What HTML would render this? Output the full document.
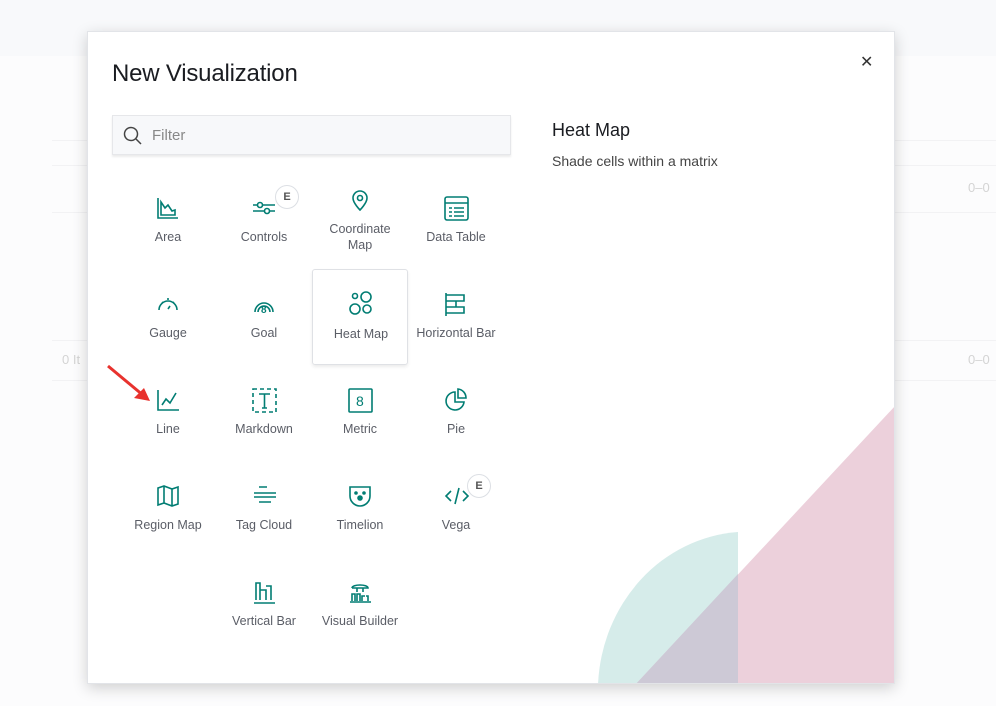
<!DOCTYPE html>
<html><head><meta charset="utf-8"><style>
*{margin:0;padding:0;box-sizing:border-box}
body{width:996px;height:706px;overflow:hidden;background:#fcfcfd;font-family:"Liberation Sans",sans-serif;position:relative}
.bgtop{position:absolute;left:0;top:0;width:996px;height:56px;background:#f8f9fb}
.bgline{position:absolute;left:52px;right:0;height:1px;background:#f2f2f4}
.modal{position:absolute;left:87px;top:31px;width:808px;height:653px;background:#fff;border:1px solid #e2e4e8;box-shadow:0 4px 14px rgba(0,0,0,.18);overflow:hidden}
h1{position:absolute;left:24px;top:28px;font-size:24px;font-weight:normal;color:#1a1c21;letter-spacing:-.2px}
.close{position:absolute;left:772px;top:20px;font-size:16px;color:#333}
.filter{position:absolute;left:24px;top:83px;width:399px;height:40px;background:#f7f8fa;border:1px solid #e6e7ea;box-shadow:0 2px 2px rgba(0,0,0,.08)}
.filter span{position:absolute;left:39px;top:11px;font-size:15px;color:#888}
.item{position:absolute;width:96px;height:96px;text-align:center}
.item svg{position:absolute;left:36px;top:18px}
.item .lbl{position:absolute;left:0;width:96px;top:51px;font-size:12.5px;color:#5a5d66;line-height:16px}
.sel{border:1px solid #dfe1e5;border-radius:3px;box-shadow:0 2px 3px rgba(0,0,0,.08)}
.badge{position:absolute;width:24px;height:24px;border-radius:12px;border:1px solid #dcdfe4;background:#fff;font-size:11px;color:#555;text-align:center;line-height:22px;font-weight:bold}
.dtitle{position:absolute;left:464px;top:88px;font-size:18px;color:#1a1c21}
.ddesc{position:absolute;left:464px;top:121px;font-size:14px;color:#444}
.num{position:absolute;font-size:13px;color:#d4d4d4}
</style></head><body>
<div class="bgtop"></div>
<div class="bgline" style="top:140px"></div>
<div class="bgline" style="top:165px"></div>
<div class="bgline" style="top:212px"></div>
<div class="bgline" style="top:340px"></div>
<div class="bgline" style="top:380px"></div>
<div class="num" style="left:968px;top:180px">0–0</div>
<div class="num" style="left:968px;top:352px">0–0</div>
<div class="num" style="left:62px;top:352px">0 It</div>
<div class="modal">
<svg style="position:absolute;left:0;top:0" width="808" height="653">
<path d="M510 653 A150 160 0 0 1 650 500 L650 653Z" fill="#d6ecea"/>
<path d="M547 653 L808 373 L808 653Z" fill="#ecd0db"/>
<path d="M547 653 L650 542 L650 653Z" fill="#cdc9d6"/>
</svg>
<h1>New Visualization</h1>
<div class="close">✕</div>
<div class="filter"><svg style="position:absolute;left:10px;top:10px" width="20" height="20" fill="none" stroke="#444" stroke-width="1.5"><circle cx="8" cy="8" r="6.5"/><path d="M13 13l5 5"/></svg><span>Filter</span></div>
<div class="dtitle">Heat Map</div>
<div class="ddesc">Shade cells within a matrix</div>

<div class="item" style="left:32px;top:146px"><svg width="24" height="24" fill="none" stroke="#017d73" stroke-width="1.6"><path d="M2 2v20h20M5 19V6l4 6 3-3 4 6 3-1v5z"/></svg><div class="lbl">Area</div></div>
<div class="item" style="left:128px;top:146px"><svg width="24" height="24" fill="none" stroke="#017d73" stroke-width="1.6"><path d="M1 9h22M1 15h22"/><circle cx="8" cy="9" r="2.5" fill="#fff"/><circle cx="15" cy="15" r="2.5" fill="#fff"/></svg><div class="lbl">Controls</div></div>
<div class="badge" style="left:187px;top:153px">E</div>
<div class="item" style="left:224px;top:138px"><svg width="24" height="24" fill="none" stroke="#017d73" stroke-width="1.6"><path d="M12 22s-7-7-7-12a7 7 0 0114 0c0 5-7 12-7 12z"/><circle cx="12" cy="10" r="2.5"/></svg><div class="lbl">Coordinate<br>Map</div></div>
<div class="item" style="left:320px;top:146px"><svg width="26" height="26" fill="none" stroke="#017d73" stroke-width="1.6"><rect x="1" y="1" width="23" height="23" rx="2"/><path d="M1 7h23M5 12h3M10 12h10M5 16h3M10 16h10M5 20h3M10 20h10"/></svg><div class="lbl">Data Table</div></div>

<div class="item" style="left:32px;top:242px"><svg width="24" height="24" fill="none" stroke="#017d73" stroke-width="1.6"><path d="M3 18A9 9 0 1121 18M12 6v2M6 10l1 1M18 10l-1 1M14 14l-2 3"/></svg><div class="lbl">Gauge</div></div>
<div class="item" style="left:128px;top:242px"><svg width="24" height="24" fill="none" stroke="#017d73" stroke-width="1.6"><path d="M3 20A9 9 0 1121 20M6 20a6 6 0 1112 0"/><text x="9" y="21" font-size="10" fill="#017d73" stroke="none" font-family="Liberation Sans" font-weight="bold">8</text></svg><div class="lbl">Goal</div></div>
<div class="item sel" style="left:224px;top:237px"><svg width="26" height="26" fill="none" stroke="#017d73" stroke-width="1.6" style="top:21px"><circle cx="6" cy="5" r="2.5"/><circle cx="17" cy="6" r="5"/><circle cx="6" cy="18" r="5"/><circle cx="18" cy="18" r="4"/></svg><div class="lbl" style="top:56px">Heat Map</div></div>
<div class="item" style="left:320px;top:242px"><svg width="24" height="24" fill="none" stroke="#017d73" stroke-width="1.6"><path d="M2 1v23M2 3h18v6H2M2 9h10v6H2M2 15h18v6H2"/></svg><div class="lbl">Horizontal Bar</div></div>

<div class="item" style="left:32px;top:338px"><svg width="24" height="24" fill="none" stroke="#017d73" stroke-width="1.6"><path d="M2 2v20h21M6 17l4-6 4 4 6-10"/></svg><div class="lbl">Line</div></div>
<div class="item" style="left:128px;top:338px"><svg width="26" height="26" fill="none" stroke="#017d73" stroke-width="1.6"><rect x="1" y="1" width="23" height="23" stroke-dasharray="4 3"/><path d="M7 6h11M12.5 6v14M10 20h5"/></svg><div class="lbl">Markdown</div></div>
<div class="item" style="left:224px;top:338px"><svg width="26" height="26" fill="none" stroke="#017d73" stroke-width="1.6"><rect x="1" y="1" width="23" height="23" rx="1"/><text x="8" y="18" font-size="14" fill="#017d73" stroke="none" font-family="Liberation Sans">8</text></svg><div class="lbl">Metric</div></div>
<div class="item" style="left:320px;top:338px"><svg width="24" height="24" fill="none" stroke="#017d73" stroke-width="1.6"><path d="M11 4a9 9 0 109 10h-9z"/><path d="M14 1a9 9 0 018 9h-8z"/></svg><div class="lbl">Pie</div></div>

<div class="item" style="left:32px;top:434px"><svg width="24" height="24" fill="none" stroke="#017d73" stroke-width="1.6"><path d="M2 4l6-2 8 3 6-2v17l-6 2-8-3-6 2zM8 2v17M16 5v17"/></svg><div class="lbl">Region Map</div></div>
<div class="item" style="left:128px;top:434px"><svg width="26" height="24" fill="none" stroke="#017d73" stroke-width="1.6"><path d="M7 3h8M2 9h22M2 13h22M7 18h12"/></svg><div class="lbl">Tag Cloud</div></div>
<div class="item" style="left:224px;top:434px"><svg width="24" height="24" fill="none" stroke="#017d73" stroke-width="1.6"><path d="M2 3h20v9c0 6-5 10-10 10S2 18 2 12z"/><circle cx="8" cy="9" r="1" fill="#017d73"/><circle cx="16" cy="9" r="1" fill="#017d73"/><circle cx="12" cy="14" r="2" fill="#017d73"/></svg><div class="lbl">Timelion</div></div>
<div class="item" style="left:320px;top:434px"><svg width="26" height="24" fill="none" stroke="#017d73" stroke-width="1.6"><path d="M7 7l-5 5 5 5M19 7l5 5-5 5M15 4l-4 16"/></svg><div class="lbl">Vega</div></div>
<div class="badge" style="left:379px;top:442px">E</div>

<div class="item" style="left:128px;top:530px"><svg width="24" height="24" fill="none" stroke="#017d73" stroke-width="1.6"><path d="M2 23h21M4 20V3h4v17M8 10h6v10M14 6h5v14"/></svg><div class="lbl">Vertical Bar</div></div>
<div class="item" style="left:224px;top:530px"><svg width="24" height="24" fill="none" stroke="#017d73" stroke-width="1.6"><path d="M4 8c0-4 16-4 16 0H4M9 8v4M15 8v4M2 22h21M4 21v-7h3v7M9 21v-7h3v7M14 21v-5h3M18 16h2v5"/></svg><div class="lbl">Visual Builder</div></div>
</div>
<svg style="position:absolute;left:100px;top:360px" width="60" height="50"><path d="M8 6l36 30" stroke="#e8322e" stroke-width="3"/><path d="M50 41L34 38 44 28z" fill="#e8322e"/></svg>
</body></html>
